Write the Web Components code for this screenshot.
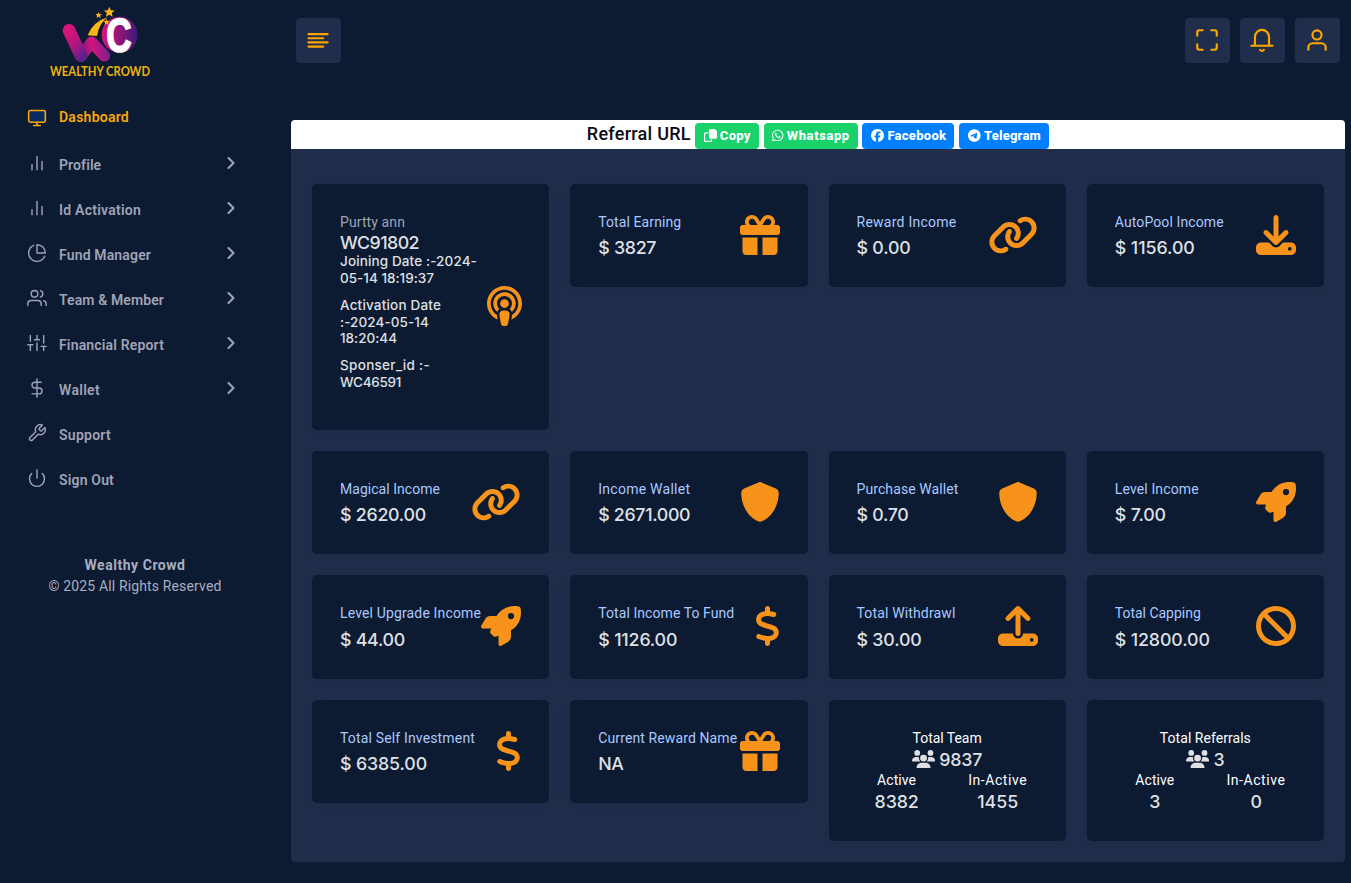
<!DOCTYPE html>
<html lang="en">
<head>
<meta charset="utf-8">
<title>Wealthy Crowd</title>
<style>
html,body{margin:0;height:100%;background:#0c1a32;overflow:hidden}
body{font-family:Roboto,"Noto Sans",sans-serif;font-size:14px;color:#dfe2e8}
</style>
</head>
<body>
<wc-app></wc-app>
<script>
const FA = {
gift:[512,"M190.5 68.8L225.3 128H224 152c-22.1 0-40-17.9-40-40s17.9-40 40-40h2.2c14.9 0 28.8 7.9 36.3 20.8zM64 88c0 14.4 3.5 28 9.6 40H32c-17.7 0-32 14.3-32 32v64c0 17.7 14.3 32 32 32H480c17.7 0 32-14.3 32-32V160c0-17.7-14.3-32-32-32H438.4c6.1-12 9.6-25.6 9.6-40c0-48.6-39.4-88-88-88h-2.2c-31.9 0-61.5 16.9-77.7 44.4L256 85.5l-24.1-41C215.7 16.9 186.1 0 154.2 0H152C103.4 0 64 39.4 64 88zm336 0c0 22.1-17.9 40-40 40H288h-1.3l34.8-59.2C329.1 55.9 342.9 48 357.8 48H360c22.1 0 40 17.9 40 40zM32 288V464c0 26.5 21.5 48 48 48H224V288H32zM288 512H432c26.5 0 48-21.5 48-48V288H288V512z"],
link:[640,"M579.8 267.7c56.5-56.5 56.5-148 0-204.5c-50-50-128.8-56.5-186.3-15.4l-1.6 1.1c-14.4 10.3-17.7 30.3-7.4 44.6s30.3 17.7 44.6 7.4l1.6-1.1c32.1-22.9 76-19.3 103.8 8.6c31.5 31.5 31.5 82.5 0 114L422.3 334.8c-31.5 31.5-82.5 31.5-114 0c-27.9-27.9-31.5-71.8-8.6-103.8l1.1-1.6c10.3-14.4 6.9-34.4-7.4-44.6s-34.4-6.9-44.6 7.4l-1.1 1.6C206.5 251.2 213 330 263 380c56.5 56.5 148 56.5 204.5 0L579.8 267.7zM60.2 244.3c-56.5 56.5-56.5 148 0 204.5c50 50 128.8 56.5 186.3 15.4l1.6-1.1c14.4-10.3 17.7-30.3 7.4-44.6s-30.3-17.7-44.6-7.4l-1.6 1.1c-32.1 22.9-76 19.3-103.8-8.6C74 372 74 321 105.5 289.5L217.7 177.2c31.5-31.5 82.5-31.5 114 0c27.9 27.9 31.5 71.8 8.6 103.9l-1.1 1.6c-10.3 14.4-6.9 34.4 7.4 44.6s34.4 6.9 44.6-7.4l1.1-1.6C433.5 260.8 427 182 377 132c-56.5-56.5-148-56.5-204.5 0L60.2 244.3z"],
download:[512,"M288 32c0-17.7-14.3-32-32-32s-32 14.3-32 32V274.7l-73.4-73.4c-12.5-12.5-32.8-12.5-45.3 0s-12.5 32.8 0 45.3l128 128c12.5 12.5 32.8 12.5 45.3 0l128-128c12.5-12.5 12.5-32.8 0-45.3s-32.8-12.5-45.3 0L288 274.7V32zM64 352c-35.3 0-64 28.7-64 64v32c0 35.3 28.7 64 64 64H448c35.3 0 64-28.7 64-64V416c0-35.3-28.7-64-64-64H346.5l-45.3 45.3c-25 25-65.5 25-90.5 0L165.5 352H64zm368 56a24 24 0 1 1 0 48 24 24 0 1 1 0-48z"],
upload:[512,"M288 109.3V352c0 17.7-14.3 32-32 32s-32-14.3-32-32V109.3l-73.4 73.4c-12.5 12.5-32.8 12.5-45.3 0s-12.5-32.8 0-45.3l128-128c12.5-12.5 32.8-12.5 45.3 0l128 128c12.5 12.5 12.5 32.8 0 45.3s-32.8 12.5-45.3 0L288 109.3zM64 352H192c0 35.3 28.7 64 64 64s64-28.7 64-64H448c35.3 0 64 28.7 64 64v32c0 35.3-28.7 64-64 64H64c-35.3 0-64-28.7-64-64V416c0-35.3 28.7-64 64-64zM432 456a24 24 0 1 0 0-48 24 24 0 1 0 0 48z"],
ban:[512,"M367.2 412.5L99.5 144.8C77.1 176.1 64 214.5 64 256c0 106 86 192 192 192c41.5 0 79.9-13.1 111.2-35.5zm45.3-45.3C434.9 335.9 448 297.5 448 256c0-106-86-192-192-192c-41.5 0-79.9 13.1-111.2 35.5L412.5 367.2zM0 256a256 256 0 1 1 512 0A256 256 0 1 1 0 256z"],
rocket:[512,"M156.6 384.9L125.7 354c-8.5-8.5-11.5-20.8-7.7-32.2c3-8.9 7-20.5 11.8-33.8L24 288c-8.6 0-16.6-4.6-20.9-12.1s-4.2-16.7 .2-24.1l52.5-88.5c13-21.9 36.5-35.3 61.9-35.3l82.3 0c2.4-4 4.8-7.7 7.2-11.3C289.1-4.1 411.1-8.1 483.9 5.3c11.6 2.1 20.6 11.2 22.8 22.8c13.4 72.9 9.3 194.8-111.4 276.7c-3.5 2.4-7.3 4.8-11.3 7.2v82.3c0 25.4-13.4 49-35.3 61.9l-88.5 52.5c-7.4 4.4-16.6 4.5-24.1 .2s-12.1-12.2-12.1-20.9V380.8c-14.1 4.9-26.4 8.9-35.7 11.9c-11.2 3.6-23.4 .5-31.8-7.8zM384 168a40 40 0 1 0 0-80 40 40 0 1 0 0 80z"],
dollar:[320,"M160 0c17.7 0 32 14.3 32 32V67.7c1.6 .2 3.1 .4 4.7 .7c.4 .1 .7 .1 1.1 .2l48 8.8c17.4 3.2 28.9 19.9 25.7 37.2s-19.9 28.9-37.2 25.7l-47.5-8.7c-31.3-4.6-58.9-1.5-78.3 6.2s-27.2 18.3-29 28.1c-2 10.7-.5 16.7 1.2 20.4c1.8 3.9 5.5 8.3 12.8 13.2c16.3 10.7 41.3 17.7 73.7 26.3l2.9 .8c28.6 7.6 63.6 16.8 89.6 33.8c14.2 9.3 27.6 21.9 35.9 39.5c8.5 17.9 10.3 37.9 6.4 59.2c-6.9 38-33.1 63.4-65.6 76.7c-13.7 5.6-28.6 9.2-44.4 11V480c0 17.7-14.3 32-32 32s-32-14.3-32-32V445.1c-.4-.1-.9-.1-1.3-.2l-.2 0 0 0c-24.4-3.8-64.5-14.3-91.5-26.3c-16.1-7.2-23.4-26.1-16.2-42.2s26.1-23.4 42.2-16.2c20.9 9.3 55.3 18.5 75.2 21.6c31.9 4.7 58.2 2 76-5.3c16.9-6.9 24.6-16.9 26.8-28.9c1.9-10.6 .4-16.7-1.3-20.4c-1.9-4-5.6-8.4-13-13.3c-16.4-10.7-41.5-17.7-74-26.3l-2.8-.7 0 0C119.4 279.3 84.4 270 58.4 253c-14.2-9.3-27.5-22-35.8-39.6c-8.4-17.9-10.1-37.9-6.1-59.2C23.7 116 52.3 91.2 84.8 78.3c13.3-5.3 27.9-8.9 43.2-11V32c0-17.7 14.3-32 32-32z"],
shield:[512,"M256 0c4.6 0 9.2 1 13.4 2.9L457.7 82.8c22 9.3 38.4 31 38.3 57.2c-.5 99.2-41.3 280.7-213.6 363.2c-16.7 8-36.1 8-52.8 0C57.3 420.7 16.5 239.2 16 140c-.1-26.2 16.3-47.9 38.3-57.2L242.7 2.9C246.8 1 251.4 0 256 0z"],
podcast:[448,"M319.4 372c48.5-31.3 80.6-85.9 80.6-148c0-97.2-78.8-176-176-176S48 126.8 48 224c0 62.1 32.1 116.6 80.6 148c1.2 17.3 4 38 7.2 57.1l.2 1C56 395.8 0 316.5 0 224C0 100.3 100.3 0 224 0S448 100.3 448 224c0 92.5-56 171.9-136 206.1l.2-1.1c3.1-19.2 6-39.8 7.2-57zm-2.3-38.1c-1.6-5.7-3.9-11.1-7-16.2c-5.8-9.7-13.5-17-21.9-22.4c19.5-17.6 31.8-43 31.8-71.3c0-53-43-96-96-96s-96 43-96 96c0 28.3 12.3 53.8 31.8 71.3c-8.4 5.4-16.1 12.7-21.9 22.4c-3.1 5.1-5.4 10.5-7 16.2C99.8 307.5 80 268 80 224c0-79.5 64.5-144 144-144s144 64.5 144 144c0 44-19.8 83.5-50.9 109.9zM224 312c32.9 0 64 8.6 64 43.8c0 33-12.9 104.1-20.6 132.9c-5.1 19-24.5 23.4-43.4 23.4s-38.2-4.4-43.4-23.4c-7.8-28.5-20.6-99.7-20.6-132.8c0-35.1 31.1-43.8 64-43.8zm0-144a56 56 0 1 1 0 112 56 56 0 1 1 0-112z"],
users:[640,"M144 0a80 80 0 1 1 0 160A80 80 0 1 1 144 0zM512 0a80 80 0 1 1 0 160A80 80 0 1 1 512 0zM0 298.7C0 239.8 47.8 192 106.7 192h42.7c15.9 0 31 3.5 44.6 9.7c-1.3 7.2-1.9 14.7-1.9 22.3c0 38.2 16.8 72.5 43.3 96c-.2 0-.4 0-.7 0H21.3C9.6 320 0 310.4 0 298.7zM405.3 320c-.2 0-.4 0-.7 0c26.6-23.5 43.3-57.8 43.3-96c0-7.6-.7-15-1.9-22.3c13.6-6.3 28.7-9.7 44.6-9.7h42.7C592.2 192 640 239.8 640 298.7c0 11.8-9.6 21.3-21.3 21.3H405.3zM224 224a96 96 0 1 1 192 0 96 96 0 1 1 -192 0zM128 485.3C128 411.7 187.7 352 261.3 352H378.7C452.3 352 512 411.7 512 485.3c0 14.7-11.9 26.7-26.7 26.7H154.7c-14.7 0-26.7-11.9-26.7-26.7z"],
copy:[512,"M256 0h148c17 0 33 7 45 19l44 44c12 12 19 28 19 45v212c0 35-29 64-64 64H256c-35 0-64-29-64-64V64c0-35 29-64 64-64zM64 128h96v48H64c-9 0-16 7-16 16v256c0 9 7 16 16 16h192c9 0 16-7 16-16v-32h48v32c0 35-29 64-64 64H64c-35 0-64-29-64-64V192c0-35 29-64 64-64z"],
facebook:[512,"M512 256C512 114.6 397.4 0 256 0S0 114.6 0 256C0 376 82.7 476.8 194.2 504.5V334.2H141.4V256h52.8V222.3c0-87.1 39.4-127.5 125-127.5c16.2 0 44.2 3.2 55.7 6.4V172c-6-.6-16.5-1-29.6-1c-42 0-58.2 15.9-58.2 57.2V256h83.6l-14.4 78.2H287V510.1C413.8 494.8 512 386.9 512 256h0z"],
telegram:[496,"M248,8C111.033,8,0,119.033,0,256S111.033,504,248,504,496,392.967,496,256,384.967,8,248,8ZM362.952,176.66c-3.732,39.215-19.881,134.378-28.1,178.3-3.476,18.584-10.322,24.816-16.948,25.425-14.4,1.326-25.338-9.517-39.287-18.661-21.827-14.308-34.158-23.215-55.346-37.177-24.485-16.135-8.612-25,5.342-39.5,3.652-3.793,67.107-61.51,68.335-66.746.153-.655.3-3.1-1.154-4.384s-3.59-.849-5.135-.5q-3.283.746-104.608,69.142-14.845,10.194-26.894,9.934c-8.855-.191-25.888-5.006-38.551-9.123-15.531-5.048-27.875-7.717-26.8-16.291q.84-6.7,18.45-13.7,108.446-47.248,144.628-62.3c68.872-28.647,83.183-33.623,92.511-33.789,2.052-.034,6.639.474,9.61,2.885a10.452,10.452,0,0,1,3.53,6.716A43.765,43.765,0,0,1,362.952,176.66Z"],
whatsapp:[448,"M380.9 97.1C339 55.1 283.2 32 223.9 32c-122.4 0-222 99.6-222 222 0 39.1 10.2 77.3 29.6 111L0 480l117.7-30.9c32.4 17.7 68.9 27 106.1 27h.1c122.3 0 224.1-99.6 224.1-222 0-59.3-25.2-115-67.1-157zm-157 341.6c-33.2 0-65.7-8.9-94-25.7l-6.7-4-69.8 18.3L72 359.2l-4.4-7c-18.5-29.4-28.2-63.3-28.2-98.2 0-101.7 82.8-184.5 184.6-184.5 49.3 0 95.6 19.2 130.4 54.1 34.8 34.9 56.2 81.2 56.1 130.5 0 101.8-84.9 184.6-186.6 184.6zm101.2-138.2c-5.5-2.8-32.8-16.2-37.9-18-5.1-1.9-8.8-2.8-12.5 2.8-3.7 5.6-14.3 18-17.6 21.8-3.2 3.7-6.5 4.2-12 1.4-32.6-16.3-54-29.1-75.5-66-5.7-9.8 5.7-9.1 16.3-30.3 1.8-3.7.9-6.9-.5-9.7-1.4-2.8-12.5-30.1-17.1-41.2-4.5-10.8-9.1-9.3-12.5-9.5-3.2-.2-6.9-.2-10.6-.2-3.7 0-9.7 1.4-14.8 6.9-5.1 5.6-19.4 19-19.4 46.3 0 27.3 19.9 53.7 22.6 57.4 2.8 3.7 39.1 59.7 94.8 83.8 35.2 15.2 49 16.5 66.6 13.9 10.7-1.6 32.8-13.4 37.4-26.4 4.6-13 4.6-24.1 3.2-27.6-1.3-3.5-5-5.4-10.5-8.2z"]
};
const LINE = {
monitor:'<rect x="2" y="3" width="20" height="14" rx="2" fill="#0b2a5e"/><path d="M8 21h8M12 17v4"/>',
bars:'<path d="M18 20V10M12 20V4M6 20v-6"/>',
pie:'<path d="M21.21 15.89A10 10 0 1 1 8 2.83M22 12A10 10 0 0 0 12 2v10z"/>',
people:'<path d="M17 21v-2a4 4 0 0 0-4-4H5a4 4 0 0 0-4 4v2"/><circle cx="9" cy="7" r="4"/><path d="M23 21v-2a4 4 0 0 0-3-3.87M16 3.13a4 4 0 0 1 0 7.75"/>',
sliders:'<path d="M4 21v-7M4 10V3M12 21v-9M12 8V3M20 21v-5M20 12V3M1 14h6M9 8h6M17 16h6"/>',
dollar:'<path d="M12 1v22M17 5H9.5a3.5 3.5 0 0 0 0 7h5a3.5 3.5 0 0 1 0 7H6"/>',
tool:'<path d="M14.7 6.3a1 1 0 0 0 0 1.4l1.6 1.6a1 1 0 0 0 1.4 0l3.77-3.77a6 6 0 0 1-7.94 7.94l-6.91 6.91a2.12 2.12 0 0 1-3-3l6.91-6.91a6 6 0 0 1 7.94-7.94l-3.76 3.76z"/>',
power:'<path d="M18.36 6.64a9 9 0 1 1-12.73 0M12 2v10"/>',
chevron:'<path d="M9 18l6-6-6-6"/>',
align:'<path d="M3.200 6.600h17.600M3.200 10.400h13.600M3.200 14.200h17.600M3.200 18.100h13.600"/>',
expand:'<path d="M8 3H5a2 2 0 0 0-2 2v3M21 8V5a2 2 0 0 0-2-2h-3M16 21h3a2 2 0 0 0 2-2v-3M3 16v3a2 2 0 0 0 2 2h3"/>',
bell:'<path d="M2.200 17.300h19.600M5.200 17.300c.3-1 .3-2 .3-3V9.200a6.500 6.500 0 0 1 13 0v5.100c0 1 0 2 .3 3M10.300 21.200a1.900 1.500 0 0 0 3.400 0"/>',
user:'<path d="M20 21v-2a4 4 0 0 0-4-4H8a4 4 0 0 0-4 4v2"/><circle cx="12" cy="7.300" r="4.200"/>'
};
class Base extends HTMLElement{
  connectedCallback(){ if(!this.shadowRoot){ this.attachShadow({mode:"open"}).innerHTML=this.render(); this.ready&&this.ready(); } }
  a(n,d=""){ return this.getAttribute(n) ?? d; }
}
const def=(n,c)=>customElements.define(n,c);

/* Spreads its text over the given width. */
def("fit-text",class extends Base{
  render(){return `<style>:host{display:inline-block;white-space:nowrap}span{display:inline-block}</style><span><slot></slot></span>`}
  ready(){
    const w=+this.a("w"), s=this.shadowRoot.querySelector("span");
    if(!w) return;
    const n=this.textContent.length, cur=s.getBoundingClientRect().width;
    s.style.letterSpacing=((w-cur)/n).toFixed(3)+"px";
  }
});
def("fa-icon",class extends Base{
  render(){const [w,d]=FA[this.a("name")],h=+this.a("size",40);
    return `<style>:host{display:inline-block;flex:none;line-height:0}</style><svg width="${w*h/512}" height="${h}" viewBox="0 0 ${w} 512" fill="currentColor"><path d="${d}"/></svg>`}
});
def("line-icon",class extends Base{
  render(){const s=this.a("size",20);
    return `<style>:host{display:inline-block;flex:none;line-height:0}</style><svg width="${s}" height="${s}" viewBox="0 0 24 24" fill="none" stroke="currentColor" stroke-width="${this.a("stroke","1.6")}" stroke-linecap="round" stroke-linejoin="round">${LINE[this.a("name")]}</svg>`}
});
def("wc-logo",class extends Base{
  render(){return `<style>:host{display:block;height:85px;padding-left:40px}svg{display:block}</style>
<svg width="120" height="85" viewBox="0 0 360 255">
<defs>
<linearGradient id="w" gradientUnits="userSpaceOnUse" x1="70" y1="100" x2="140" y2="160"><stop offset="0" stop-color="#d8137a"/><stop offset=".5" stop-color="#b5177f"/><stop offset="1" stop-color="#5c1f8c"/></linearGradient>
<linearGradient id="v" gradientUnits="userSpaceOnUse" x1="125" y1="165" x2="208" y2="150"><stop offset="0" stop-color="#6a1a8c"/><stop offset=".4" stop-color="#d3147c"/><stop offset="1" stop-color="#7a1f90"/></linearGradient>
<linearGradient id="o" x1="0" y1="0" x2="1" y2="0"><stop offset="0" stop-color="#e0127a"/><stop offset="1" stop-color="#3c1a78"/></linearGradient>
</defs>
<path d="M124 166L155 127L193 167" fill="none" stroke="url(#v)" stroke-width="35" stroke-linecap="round" stroke-linejoin="round"/>
<path d="M87 91L123 167" fill="none" stroke="url(#w)" stroke-width="38" stroke-linecap="round"/>
<circle cx="239" cy="104" r="54" fill="url(#o)"/>
<text x="199" y="157" textLength="76" lengthAdjust="spacingAndGlyphs" font-family="Liberation Sans,sans-serif" font-weight="700" font-size="144" fill="#fff" stroke="#fff" stroke-width="5">C</text>
<path d="M143 106Q160 64 203 52Q176 72 171 108Z" fill="#fdb515"/>
<g fill="#fdb515"><path d="M208 20l4.500 10.500 11.500 1-8.700 7.500 2.700 11.200-10-6-10 6 2.700-11.200-8.700-7.500 11.500-1z"/>
<path transform="translate(51 24) scale(.6)" d="M208 20l4.500 10.500 11.500 1-8.700 7.500 2.700 11.200-10-6-10 6 2.700-11.200-8.700-7.500 11.500-1z"/>
<path transform="translate(75 45) scale(.6)" d="M208 20l4.500 10.500 11.500 1-8.700 7.500 2.700 11.200-10-6-10 6 2.700-11.200-8.700-7.500 11.500-1z"/></g>
<text x="30" y="228" textLength="300" lengthAdjust="spacingAndGlyphs" font-family="Lato,sans-serif" font-weight="700" font-size="37" fill="#f0b40c">WEALTHY CROWD</text>
</svg>`}
});
def("nav-item",class extends Base{
  render(){const on=this.hasAttribute("active"), more=this.hasAttribute("more");
    return `<style>:host{display:grid;grid-template-columns:20px 1fr 20px;column-gap:12px;align-items:center;height:45px;padding:0 29px 0 27px;color:${on?"#f9a70b":"#a0a3b5"};font-weight:600}
.t{padding-top:${on?0:4}px;line-height:20px}.i{padding-top:${on?2:0}px}</style>
<line-icon class="i" name="${this.a("icon")}" stroke="${on?1.9:1.7}"></line-icon>
<div class="t"><fit-text w="${this.a("w")}">${this.textContent}</fit-text></div>
${more?'<line-icon name="chevron" stroke="2.5"></line-icon>':""}`}
});
def("side-bar",class extends Base{
  render(){return `<style>:host{display:block;width:270px;flex:none}
nav{padding-top:9px}nav-item[active]{margin-bottom:1px}
footer{margin-top:55px;text-align:center;line-height:21px;color:#a9aec0}footer b{display:block}</style>
<wc-logo></wc-logo>
<nav>
<nav-item active icon="monitor" w="70">Dashboard</nav-item>
<nav-item more icon="bars" w="42">Profile</nav-item>
<nav-item more icon="bars" w="82">Id Activation</nav-item>
<nav-item more icon="pie" w="92">Fund Manager</nav-item>
<nav-item more icon="people" w="105">Team &amp; Member</nav-item>
<nav-item more icon="sliders" w="105">Financial Report</nav-item>
<nav-item more icon="dollar" w="41">Wallet</nav-item>
<nav-item icon="tool" w="52">Support</nav-item>
<nav-item icon="power" w="55">Sign Out</nav-item>
</nav>
<footer><b><fit-text w="101">Wealthy Crowd</fit-text></b><fit-text w="173">© 2025 All Rights Reserved</fit-text></footer>`}
});
def("tool-button",class extends Base{
  render(){return `<style>:host{display:grid;place-items:center;box-sizing:border-box;padding:0 1px 1px 0;width:45px;height:45px;border-radius:4px;background:#202e4b;color:#ffa500}</style><line-icon name="${this.a("icon")}" size="${this.a("size",26)}" stroke="${this.a("stroke","2")}"></line-icon>`}
});
def("share-button",class extends Base{
  render(){return `<style>:host{display:flex;align-items:center;justify-content:center;gap:3px;box-sizing:border-box;width:${this.a("width")}px;height:26px;padding:0 0 2px 1px;border-radius:4px;background:${this.a("color")};color:#fff;font-weight:800;font-size:13px}</style>
<fa-icon name="${this.a("icon")}" size="13"></fa-icon><fit-text w="${this.a("w")}">${this.textContent}</fit-text>`}
});
def("referral-bar",class extends Base{
  render(){return `<style>:host{display:flex;justify-content:center;align-items:flex-end;height:29px;background:#fff;border-radius:4px 4px 0 0;color:#0b0b14}
.t{font-size:18px;font-weight:500;line-height:29px;height:30px;margin-right:4px}
.s{display:flex;gap:4.800px}</style>
<div class="t"><fit-text w="104">Referral URL</fit-text></div>
<div class="s"><share-button icon="copy" width="64" w="31" color="#19d26b">Copy</share-button>
<share-button icon="whatsapp" width="94" w="63" color="#19d26b">Whatsapp</share-button>
<share-button icon="facebook" width="92" w="59" color="#0080ff">Facebook</share-button>
<share-button icon="telegram" width="90" w="57" color="#0080ff">Telegram</share-button></div>`}
});
const CARD=`:host{display:block;box-sizing:border-box;border-radius:5px;background:#0c1a32;padding:28px;box-shadow:0 2px 12px rgba(12,26,50,.12)}
.label{line-height:21px;color:#a9c9ff;white-space:nowrap}.value{font-family:Inter,sans-serif;font-size:17.800px;font-weight:500;color:#dfe0e4}`;
def("stat-card",class extends Base{
  render(){return `<style>${CARD}
:host{height:103.400px}.row{display:flex;justify-content:space-between;align-items:center}
.txt{width:0;flex:1}.value{margin-top:4.200px;line-height:22px}fa-icon{color:#f7931a;margin-top:-1px}</style>
<div class="row"><div class="txt"><div class="label"><fit-text w="${this.a("lw")}">${this.a("label")}</fit-text></div>
<div class="value"><fit-text w="${this.a("vw")}">${this.a("value")}</fit-text></div></div><fa-icon name="${this.a("icon")}"></fa-icon></div>`}
});
def("profile-card",class extends Base{
  render(){return `<style>${CARD}
:host{height:246px}.row{display:flex;justify-content:space-between;align-items:center}
.label{color:#9ea5b5}.value{line-height:20.300px}.d{font-family:Inter,sans-serif;font-size:13.500px;line-height:16.800px;font-weight:500;color:#dfe0e4;margin:0 0 10px}.d fit-text{display:block}fa-icon{color:#f7931a;margin-top:-1px;margin-right:-.5px}</style>
<div class="row"><div><div class="label"><fit-text w="65">Purtty ann</fit-text></div>
<div class="value"><fit-text w="79">WC91802</fit-text></div>
<div class="d"><fit-text w="137">Joining Date :-2024-</fit-text><fit-text w="94">05-14 18:19:37</fit-text></div>
<div class="d"><fit-text w="101">Activation Date</fit-text><fit-text w="89">:-2024-05-14</fit-text><fit-text w="57">18:20:44</fit-text></div>
<div class="d"><fit-text w="90">Sponser_id :-</fit-text><fit-text w="61">WC46591</fit-text></div></div>
<fa-icon name="podcast"></fa-icon></div>`}
});
def("team-card",class extends Base{
  render(){const f=(k)=>{const [t,w]=this.a(k).split("|");return `<fit-text w="${w}">${t}</fit-text>`};
    return `<style>${CARD}
:host{height:141.200px;text-align:center}.label{color:#fff}.value{line-height:21px;height:21px}
.total{display:flex;justify-content:center;align-items:center;gap:4px}.total fa-icon{margin-top:-1px}
.cols{display:grid;grid-template-columns:1fr 1fr;margin:0 -10.500px}</style>
<div class="label">${f("label")}</div><div class="value total"><fa-icon name="users" size="18.500"></fa-icon>${f("total")}</div>
<div class="cols"><div><div class="label"><fit-text w="39">Active</fit-text></div><div class="value">${f("on")}</div></div>
<div><div class="label"><fit-text w="59">In-Active</fit-text></div><div class="value">${f("off")}</div></div></div>`}
});
def("card-grid",class extends Base{
  render(){
    const c=(label,lw,value,vw,icon)=>`<stat-card label="${label}" lw="${lw}" value="${value}" vw="${vw}" icon="${icon}"></stat-card>`;
    return `<style>:host{display:grid;grid-template-columns:repeat(4,1fr);gap:21px;align-items:start;padding:35px 21px 21px;background:#202e4b;border-radius:0 0 4px 4px}</style>
<profile-card></profile-card>
${c("Total Earning",83,"$ 3827",58,"gift")}${c("Reward Income",100,"$ 0.00",54,"link")}${c("AutoPool Income",109,"$ 1156.00",80,"download")}
${c("Magical Income",100,"$ 2620.00",86,"link")}${c("Income Wallet",92,"$ 2671.000",92,"shield")}${c("Purchase Wallet",102,"$ 0.70",52,"shield")}${c("Level Income",84,"$ 7.00",51,"rocket")}
${c("Level Upgrade Income",141,"$ 44.00",65,"rocket")}${c("Total Income To Fund",136,"$ 1126.00",79,"dollar")}${c("Total Withdrawl",99,"$ 30.00",65,"upload")}${c("Total Capping",86,"$ 12800.00",95,"ban")}
${c("Total Self Investment",135,"$ 6385.00",87,"dollar")}${c("Current Reward Name",139,"NA",25,"gift")}
<team-card label="Total Team|69" total="9837|43" on="8382|44" off="1455|41"></team-card>
<team-card label="Total Referrals|91" total="3|11" on="3|11" off="0|11"></team-card>`}
});
def("wc-app",class extends Base{
  render(){return `<style>:host{display:flex;height:883px;width:1351px}
main{flex:1;padding:0 6px 0 21px}
header{display:flex;gap:10px;padding:18px 5px 57px}.sp{flex:1}</style>
<side-bar></side-bar>
<main><header><tool-button icon="align"></tool-button><span class="sp"></span><tool-button icon="expand"></tool-button><tool-button icon="bell"></tool-button><tool-button icon="user"></tool-button></header>
<referral-bar></referral-bar><card-grid></card-grid></main>`}
});
</script>
</body>
</html>
